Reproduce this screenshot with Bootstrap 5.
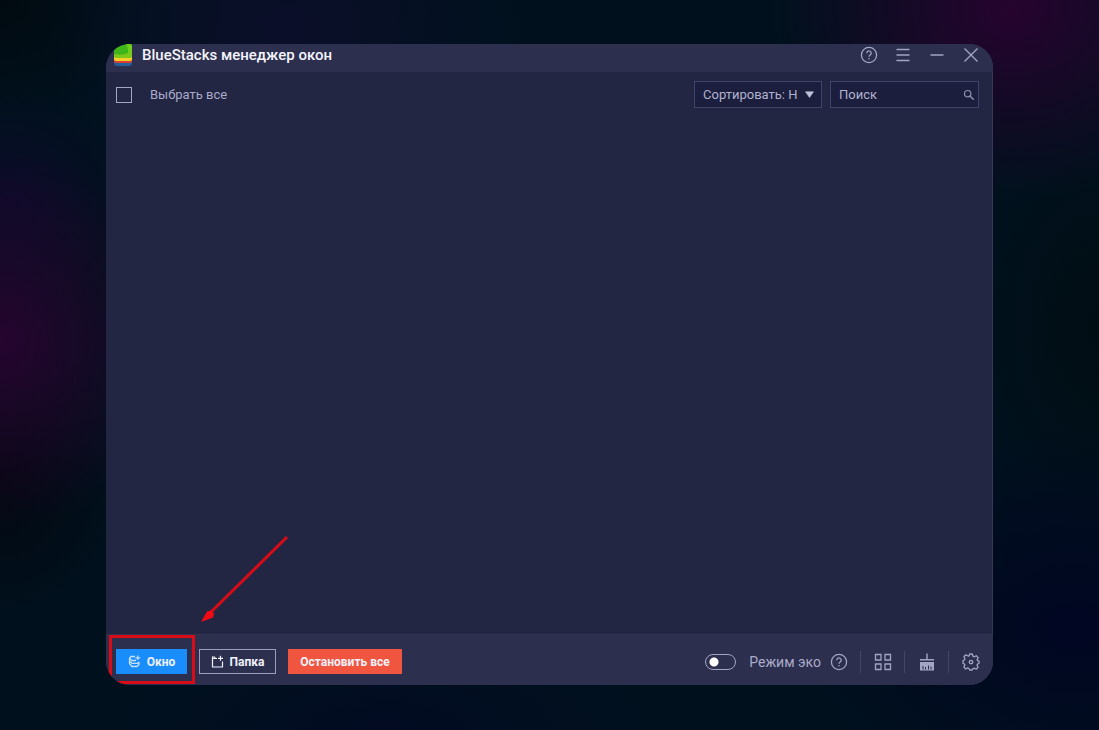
<!DOCTYPE html>
<html lang="ru">
<head>
<meta charset="utf-8">
<meta name="viewport" content="width=device-width, initial-scale=1">
<title>BlueStacks менеджер окон</title>
<link href="https://cdn.jsdelivr.net/npm/bootstrap@5.3.0/dist/css/bootstrap.min.css" rel="stylesheet">
<style>
  body {
    font-family: Roboto, Inter, "Liberation Sans", sans-serif;
    font-size: 13px;
    line-height: 20px;
    color: #a9abca;
    background:
      radial-gradient(circle 190px at 0 340px, #26042e, #26042e00),
      radial-gradient(ellipse 240px 190px at 92% 10px, #26032e, #26032e00),
      radial-gradient(ellipse 240px 200px at 26% 30px, #0b0e29, #0b0e2900),
      radial-gradient(ellipse 130px 110px at 10px 200px, #0b0b29, #0b0b2900),
      radial-gradient(ellipse 300px 200px at 98% 86%, #010622, #01062200),
      radial-gradient(ellipse 300px 120px at 35% 100%, #020b22, #020b2200),
      radial-gradient(ellipse 150px 120px at 0 0, #010a10, #010a1000),
      radial-gradient(ellipse 130px 150px at 0 65%, #030710, #03071000),
      radial-gradient(ellipse 120px 200px at 100% 45%, #010d13, #010d1300),
      #00111d;
  }
  .desk { padding: 44px 106px 45px; }
  .app-window { background: #232642; border-radius: 24px; box-shadow: inset -1px 0 #363855; }
  .titlebar { height: 28px; padding: 0 5px 6px 6px; background: #2d2f4e; }
  .titlebar h1 { font-size: 15px; line-height: 20px; font-weight: 500; color: #f4f4fc; }
  .win-btn { width: 34px; height: 22px; padding: 0; border: 0; background: none; color: #a3a5c5; display: flex; align-items: center; justify-content: center; }
  .tools { padding: 9px 14px 9px 10px; }
  .form-check-input.pick { width: 16px; height: 16px; margin: 0; border: 1px solid #a3a5c5; border-radius: 0; background-color: transparent; }
  .pick-row { gap: 18px; }
  .field { height: 27px; border: 1px solid #40436a; border-radius: 0; background: #1b1e3c; color: #b0b2d0; font-size: 13px; line-height: 20px; padding: 0 8px; }
  .field::placeholder { color: #b0b2d0; opacity: 1; }
  .sort-box { width: 128px; }
  .sort-box select { appearance: none; width: 100%; }
  .search-box { width: 149px; }
  .search-box input { width: 100%; }
  .field-icon { position: absolute; top: 0; bottom: 0; margin: auto 0; pointer-events: none; }
  .statusbar { padding: 14px 13px 11px 10px; background: #2d2f4e; border-top: 1px solid #31334f; }
  .act { height: 25px; padding: 0; border: 1px solid transparent; border-radius: 0; font-size: 12px; line-height: 18px; font-weight: 700; color: #f0f1fb; display: flex; align-items: center; justify-content: center; gap: 6px; white-space: nowrap; }
  .act-new { width: 71px; background: #1a8dfc; }
  .act-folder { width: 77px; background: transparent; border-color: #9c9ebc; }
  .act-stop { width: 114px; background: #ef553f; }
  .act-row { gap: 12px; }
  .frame-mark { position: absolute; inset: -14px -8px -10px -7px; border: 3px solid #d90b17; pointer-events: none; }
  .arrow-mark { position: absolute; left: 84px; bottom: 50px; pointer-events: none; }
  .eco-row { gap: 9px; }
  .eco { width: 31px; height: 16px; appearance: none; margin: 0 4px 0 0; border: 1px solid #a3a5c5; border-radius: 8px; background: radial-gradient(circle at 8px 7px, #fff 4px, transparent 5px); }
  .eco:checked { background: radial-gradient(circle at 21px 7px, #fff 4px, transparent 5px); }
  .eco-text { font-size: 14px; line-height: 20px; }
  .tool-row { gap: 12px; }
  .tool { width: 18px; height: 20px; padding: 0; border: 0; background: none; color: #a3a5c5; display: flex; align-items: center; justify-content: center; }
  .split { width: 2px; height: 22px; border-left: 1px solid #43466a; }
  svg { display: block; flex: none; }
</style>
</head>
<body>
<svg width="0" height="0" class="position-absolute" aria-hidden="true">
  <symbol id="help" viewBox="0 0 18 18">
    <circle cx="9" cy="9" r="7.6" fill="none" stroke="currentColor" stroke-width="1.3"/>
    <path d="M6.8 7.2a2.2 2.2 0 1 1 3.400 1.800c-.8.5-1.200.8-1.200 1.800" fill="none" stroke="currentColor" stroke-width="1.3"/>
    <circle cx="9" cy="12.8" r=".8" fill="currentColor"/>
  </symbol>
</svg>
<div class="desk min-vh-100 d-flex flex-column">
  <div class="app-window flex-grow-1 d-flex flex-column overflow-hidden">
    <header class="titlebar d-flex align-items-center">
      <svg width="22" height="22" viewBox="0 0 22 22" aria-hidden="true">
        <path d="M2 17h18v2q0 3-3 3H5q-3 0-3-3z" fill="#245f98"/>
        <path d="M2 14h18v3q0 2-3 2H5q-3 0-3-2z" fill="#dc3d32"/>
        <path d="M2 12h18v3q0 2-3 2H5q-3 0-3-2z" fill="#f5cf2a"/>
        <path d="M2 6Q5 0 12 0h6q2 0 2 2v9q0 3-3 3H5q-3 0-3-3z" fill="#3fb51a"/>
        <path d="M14 0h4q2 0 2 2v9q0 3-3 3h-1q1-9-2-14z" fill="#6fce1b"/>
        <path d="M2 10q9 2 17-2v3q0 3-3 3H5q-3 0-3-3z" fill="#7cc91b"/>
      </svg>
      <h1 class="mb-0 ms-2 me-auto">BlueStacks менеджер окон</h1>
      <button type="button" class="win-btn" aria-label="Справка"><svg width="18" height="18"><use href="#help"/></svg></button>
      <button type="button" class="win-btn" aria-label="Меню"><svg width="14" height="14" viewBox="0 0 14 14" stroke="currentColor" stroke-width="1.300"><path d="M.5 1.500h13M.5 7h13M.5 12.500h13"/></svg></button>
      <button type="button" class="win-btn" aria-label="Свернуть"><svg width="14" height="14" viewBox="0 0 14 14" stroke="currentColor" stroke-width="1.300"><path d="M.5 7h13"/></svg></button>
      <button type="button" class="win-btn" aria-label="Закрыть"><svg width="16" height="16" viewBox="0 0 16 16" stroke="currentColor" stroke-width="1.400"><path d="M1.500 1.500l13 13M14.500 1.500l-13 13"/></svg></button>
    </header>

    <main class="flex-grow-1">
      <div class="tools d-flex align-items-center">
        <div class="pick-row d-flex align-items-center me-auto">
          <input class="form-check-input pick" type="checkbox" id="all">
          <label for="all">Выбрать все</label>
        </div>
        <div class="sort-box position-relative me-2">
          <select class="field" aria-label="Сортировка"><option>Сортировать: Н</option></select>
          <svg class="field-icon end-0 me-2" width="9" height="7" viewBox="0 0 9 7" aria-hidden="true"><path d="M.5.8h8L4.500 6.500z" fill="#c0c1dc" stroke="#c0c1dc" stroke-linejoin="round" stroke-width=".6"/></svg>
        </div>
        <div class="search-box position-relative">
          <input class="field" type="text" placeholder="Поиск" aria-label="Поиск">
          <svg class="field-icon end-0 me-1" width="12" height="12" viewBox="0 0 12 12" fill="none" stroke="#8f91b1" aria-hidden="true"><circle cx="4.700" cy="4.700" r="3.200" stroke-width="1.200"/><path d="M7.200 7.200l3.600 3.600" stroke-width="1.500"/></svg>
        </div>
      </div>
    </main>

    <footer class="statusbar d-flex align-items-center justify-content-between">
      <div class="act-row d-flex align-items-center">
        <div class="position-relative">
          <button type="button" class="act act-new">
            <svg width="13" height="13" viewBox="0 0 13 13" fill="none" stroke="#c4e0ff" stroke-width="1.300" aria-hidden="true"><path d="M7 1.500H3L1.500 3.500 4 5.500h4M1.500 3.500V6L4 8.300h5.500L11 7M1.500 6.500v2.300L4 11.500h5l2-2V7M9.800.5v4.600M7.500 2.800h4.800"/></svg>
            Окно
          </button>
          <div class="frame-mark"></div>
          <svg class="arrow-mark" width="90" height="90" viewBox="0 0 90 90" aria-hidden="true"><path d="M87 3 11 78" stroke="#d90b17" stroke-width="3"/><path d="M1 88 7 77.500l4-1 3 3-1 4z" fill="#f20a14"/></svg>
        </div>
        <button type="button" class="act act-folder">
          <svg width="13" height="13" viewBox="0 0 13 13" fill="none" stroke="currentColor" stroke-width="1.200" aria-hidden="true"><path d="M6 3.500H4.500L3.500 2h-2v10h10V6.500M1.500 3.500h3M9.500.8v5M7 3.300h5"/></svg>
          Папка
        </button>
        <button type="button" class="act act-stop">Остановить все</button>
      </div>

      <div class="tool-row d-flex align-items-center">
        <div class="eco-row d-flex align-items-center">
          <input class="eco" type="checkbox" role="switch" id="eco">
          <label class="eco-text" for="eco">Режим эко</label>
          <button type="button" class="tool" aria-label="Что такое режим эко"><svg width="18" height="18"><use href="#help"/></svg></button>
        </div>
        <span class="split"></span>
        <button type="button" class="tool" aria-label="Упорядочить окна"><svg width="18" height="18" viewBox="0 0 18 18" fill="none" stroke="currentColor" stroke-width="1.300"><path d="M1.500 1.500h5.500v5.500H1.500zM11 1.500h5.500v5.500H11zM1.500 11h5.500v5.500H1.500zM11 11h5.500v5.500H11z"/></svg></button>
        <span class="split"></span>
        <button type="button" class="tool" aria-label="Очистка диска"><svg width="16" height="18" viewBox="0 0 16 18"><path d="M7.300.5h1.400v5.500H15v1.500H1V6h6.300zM1 9h14v8.500H1z" fill="currentColor"/><path d="M4 13v3.500M6.500 14v2.500M9.500 12.500v4M12 13.500v3" stroke="#2d2f4e" stroke-width="1"/></svg></button>
        <span class="split"></span>
        <button type="button" class="tool" aria-label="Настройки"><svg width="18" height="18" viewBox="-9 -9 18 18" fill="none" stroke="currentColor" stroke-width="1.300" stroke-linejoin="round"><path d="M-1.300-8h2.600L2-5.800l1.300.6 2-1.100 1.900 1.900-1.100 2L6.600-1.300 8-.9V1.300L6.600 2l-.6 1.300 1.100 2-1.900 1.900-2-1.100L2 6.500 1.300 8h-2.600L-2 6.500l-1.300-.6-2 1.100-1.900-1.900 1.100-2L-6.600 2-8 1.300v-2.600L-6.600-2-6-3.300l-1.100-2 1.900-1.900 2 1.100L-2-6z"/><circle r="1.700"/></svg></button>
      </div>
    </footer>
  </div>
</div>
<script src="https://cdn.jsdelivr.net/npm/bootstrap@5.3.0/dist/js/bootstrap.bundle.min.js"></script>
</body>
</html>
